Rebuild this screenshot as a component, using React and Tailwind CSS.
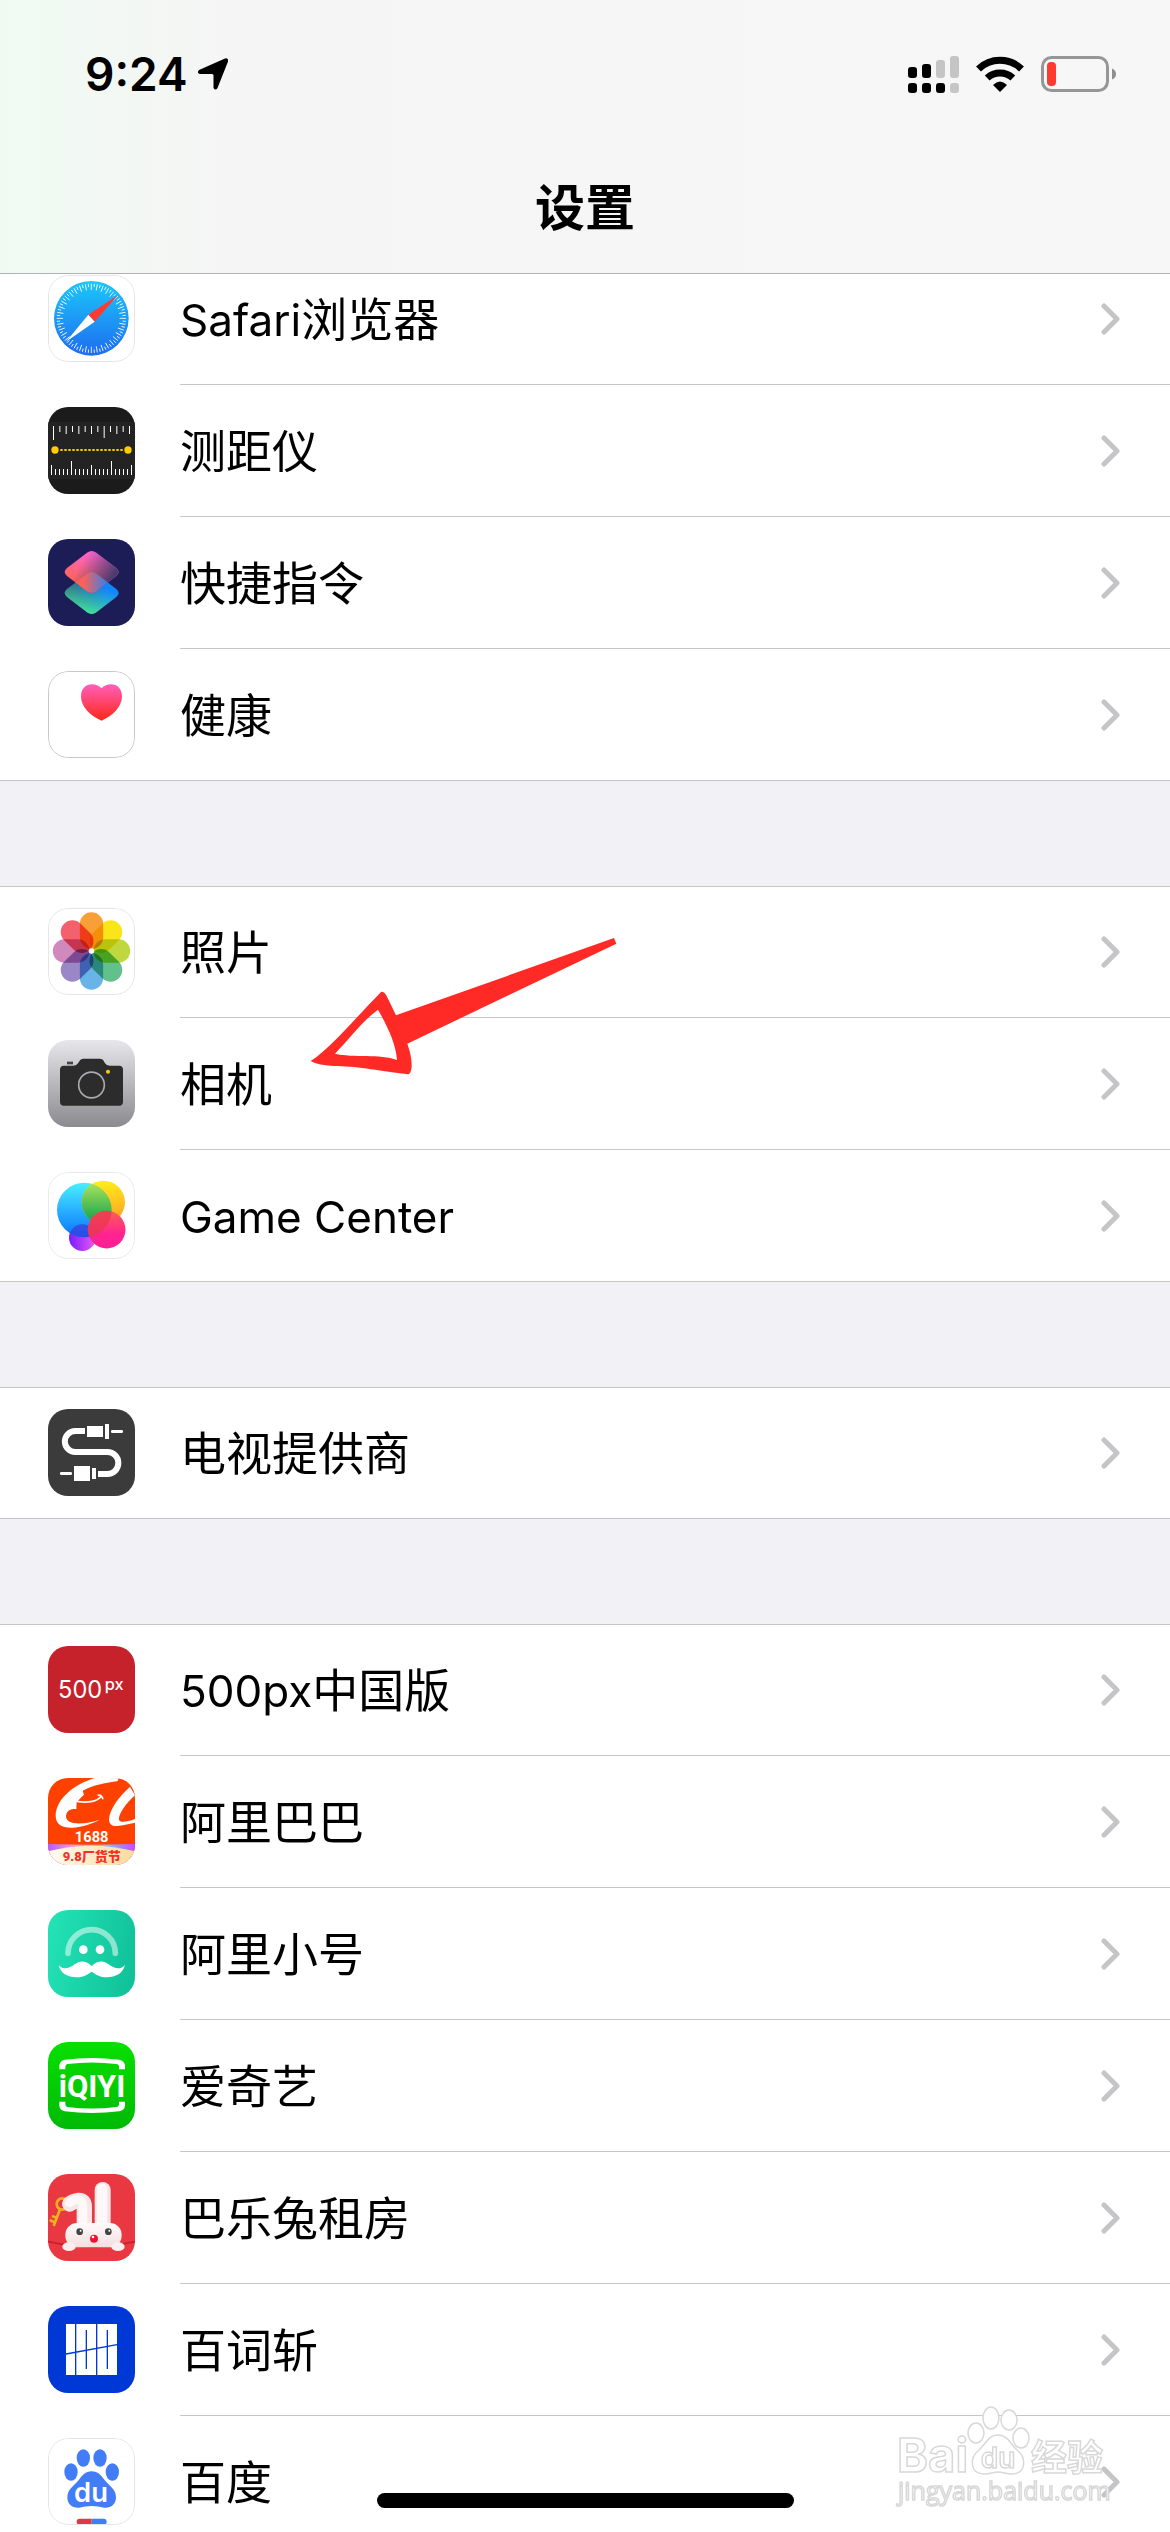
import clsx from "clsx";

const safariTicks = Array.from({ length: 72 }, (_, i) => i);
const topTicks = [42, 18, 24, 18, 24, 18, 24, 18, 36, 18, 24, 18, 24];
const bottomTicks = [30, 18, 18, 18, 18, 42, 18, 18, 18, 18, 30, 18, 18, 18, 18, 42, 18, 18, 18, 18, 30];
const petals = ["#f99f38", "#fae51a", "#c0d840", "#62c08c", "#69b4e6", "#9a88c6", "#d088bd", "#f3626c"];

// Every app icon is drawn on a 261 unit square
function Tile({ fill = "#fff", border, children }) {
  return (
    <svg viewBox="0 0 261 261" className="size-[87px] shrink-0 overflow-hidden rounded-[20px]" aria-hidden="true">
      <rect width="261" height="261" fill={fill} />
      {children}
      {border && <rect x="1.5" y="1.5" width="258" height="258" rx="59" fill="none" stroke={border} strokeWidth="3" />}
    </svg>
  );
}

function SafariIcon() {
  return (
    <Tile border="#e5e5e7">
      <defs>
        <linearGradient id="safari" x1="0" y1="0" x2="0" y2="1">
          <stop offset="0" stopColor="#1bc8fb" />
          <stop offset="1" stopColor="#1e6cf0" />
        </linearGradient>
      </defs>
      <circle cx="130" cy="130" r="112" fill="url(#safari)" />
      {safariTicks.map((i) => (
        <line key={i} x1="130" x2="130" y1="26" y2={i % 2 ? 36 : 45} stroke="#fff" strokeWidth="2.5" transform={`rotate(${i * 5} 130 130)`} />
      ))}
      <path d="M210 60 L121 119 L140 140 Z" fill="#ff3b30" />
      <path d="M54 200 L121 119 L140 140 Z" fill="#fff" />
    </Tile>
  );
}

function MeasureIcon() {
  return (
    <Tile fill="#1b1b1b">
      <rect y="45" width="261" height="171" fill="#232323" />
      {topTicks.map((h, i) => (
        <rect key={i} x={15 + i * 19} y="57" width="3" height={h} fill="#fff" />
      ))}
      {bottomTicks.map((h, i) => (
        <rect key={i} x={9 + i * 12} y={204 - h} width="3" height={h} fill="#fff" />
      ))}
      <line x1="37" x2="226" y1="129" y2="129" stroke="#ffcc00" strokeWidth="6" strokeDasharray="7 5" />
      <circle cx="21" cy="129" r="11" fill="#ffcc00" />
      <circle cx="240" cy="129" r="11" fill="#ffcc00" />
    </Tile>
  );
}

const diamond = "M-14 -58 Q0 -68 14 -58 L74 -12 Q88 0 74 12 L14 58 Q0 68 -14 58 L-74 12 Q-88 0 -74 -12 Z";

function ShortcutsIcon() {
  return (
    <Tile fill="#1c1c57">
      <defs>
        <linearGradient id="scBlue" x1="0" y1="0" x2="1" y2="0">
          <stop offset="0" stopColor="#33566f" />
          <stop offset="0.75" stopColor="#1284fb" />
        </linearGradient>
        <linearGradient id="scGreen" x1="0.65" y1="0.35" x2="0.4" y2="1">
          <stop offset="0" stopColor="#3fd8a0" stopOpacity="0" />
          <stop offset="1" stopColor="#45e696" />
        </linearGradient>
        <linearGradient id="scPink" x1="0.6" y1="0" x2="0.3" y2="0.8">
          <stop offset="0" stopColor="#f964dc" />
          <stop offset="1" stopColor="#ff6450" />
        </linearGradient>
        <linearGradient id="scFade" x1="0.3" y1="0.3" x2="0.9" y2="0.6">
          <stop offset="0" stopColor="#4b3a6e" stopOpacity="0" />
          <stop offset="1" stopColor="#4b3a6e" />
        </linearGradient>
        <linearGradient id="scMix" x1="0.35" y1="0" x2="0.8" y2="0">
          <stop offset="0" stopColor="#f9625a" />
          <stop offset="1" stopColor="#2f80ee" />
        </linearGradient>
        <clipPath id="scClip">
          <path d={diamond} transform="translate(131 99)" />
        </clipPath>
      </defs>
      <g transform="translate(131 162)">
        <path d={diamond} fill="url(#scBlue)" />
        <path d={diamond} fill="url(#scGreen)" />
      </g>
      <g transform="translate(131 99)">
        <path d={diamond} fill="url(#scPink)" />
        <path d={diamond} fill="url(#scFade)" />
      </g>
      <g clipPath="url(#scClip)">
        <path d={diamond} transform="translate(131 162)" fill="url(#scMix)" />
      </g>
    </Tile>
  );
}

function HealthIcon() {
  return (
    <Tile border="#c8c8ca">
      <defs>
        <linearGradient id="heart" x1="0" y1="0" x2="0" y2="1">
          <stop offset="0" stopColor="#ff5fbb" />
          <stop offset="1" stopColor="#ff2616" />
        </linearGradient>
      </defs>
      <path d="M160.500 149 C126 134 99 108 99 76 C99 54 113 40 132 40 C145 40 155 45 160.500 52 C166 45 176 40 189 40 C208 40 222 54 222 76 C222 108 195 134 160.500 149 Z" fill="url(#heart)" />
    </Tile>
  );
}

function PhotosIcon() {
  return (
    <Tile border="#e5e5e7">
      <g transform="translate(130.500 129)">
        {petals.map((color, i) => (
          <rect key={color} x="-35" y="-116" width="70" height="110" rx="35" fill={color} transform={`rotate(${i * 45})`} className="mix-blend-multiply" />
        ))}
        <circle r="8" fill="#fff" />
      </g>
    </Tile>
  );
}

function CameraIcon() {
  return (
    <Tile fill="url(#camera)">
      <defs>
        <linearGradient id="camera" x1="0" y1="0" x2="0" y2="1">
          <stop offset="0" stopColor="#e6e6eb" />
          <stop offset="1" stopColor="#8b8a8f" />
        </linearGradient>
      </defs>
      <rect x="57" y="65" width="18" height="8" fill="#444446" />
      <path d="M48 77 H76 Q86 77 90 70 L96 61 Q99 56 106 56 H156 Q163 56 166 61 L171 70 Q175 77 185 77 H213 Q225 77 225 89 V185 Q225 197 213 197 H48 Q36 197 36 185 V89 Q36 77 48 77 Z" fill="#2c2c2c" />
      <circle cx="130.500" cy="135" r="38.500" fill="none" stroke="#a9a9ae" strokeWidth="5" />
      <circle cx="180" cy="95" r="6" fill="#ffcc00" />
    </Tile>
  );
}

function GameCenterIcon() {
  return (
    <Tile border="#e9e9e9">
      <defs>
        <linearGradient id="gcBlue" x1="0" y1="0" x2="0" y2="1">
          <stop offset="0" stopColor="#48f0ff" />
          <stop offset="1" stopColor="#0a72ff" />
        </linearGradient>
        <linearGradient id="gcYellow" x1="0" y1="0" x2="0.2" y2="1">
          <stop offset="0" stopColor="#fff61a" />
          <stop offset="1" stopColor="#ffa624" />
        </linearGradient>
        <linearGradient id="gcGreen" x1="0" y1="0" x2="0" y2="1">
          <stop offset="0" stopColor="#b5e65c" />
          <stop offset="1" stopColor="#0aa04c" />
        </linearGradient>
        <linearGradient id="gcPink" x1="0" y1="0" x2="0" y2="1">
          <stop offset="0" stopColor="#ff5f52" />
          <stop offset="0.6" stopColor="#ff2490" />
          <stop offset="1" stopColor="#ff1f96" />
        </linearGradient>
        <linearGradient id="gcPurple" x1="0" y1="0" x2="1" y2="0">
          <stop offset="0" stopColor="#7a1cff" />
          <stop offset="1" stopColor="#e85af0" />
        </linearGradient>
        <clipPath id="gcClip">
          <circle cx="109" cy="114" r="82" />
        </clipPath>
      </defs>
      <circle cx="103" cy="197" r="40" fill="url(#gcPurple)" />
      <circle cx="109" cy="114" r="82" fill="url(#gcBlue)" />
      <circle cx="166" cy="91" r="65" fill="url(#gcYellow)" />
      <g clipPath="url(#gcClip)">
        <circle cx="166" cy="91" r="65" fill="url(#gcGreen)" />
        <circle cx="103" cy="197" r="40" fill="#3a3bdc" opacity="0.7" />
      </g>
      <circle cx="176" cy="173" r="56.500" fill="url(#gcPink)" />
      <g clipPath="url(#gcClip)">
        <circle cx="176" cy="173" r="56.500" fill="#e8384f" opacity="0.75" />
      </g>
    </Tile>
  );
}

function TvProviderIcon() {
  return (
    <Tile fill="#3b3b3b">
      <path d="M111 66 H82 A31.500 31.500 0 0 0 82 129 H178 A33 33 0 0 1 178 195 H150" fill="none" stroke="#fff" strokeWidth="18" />
      <g fill="#fff">
        <rect x="117" y="51" width="48" height="33" />
        <rect x="171" y="45" width="12" height="45" />
        <rect x="189" y="63" width="36" height="9" rx="4" />
        <rect x="78" y="171" width="48" height="45" />
        <rect x="132" y="177" width="12" height="33" />
        <rect x="36" y="189" width="36" height="9" rx="4" />
      </g>
    </Tile>
  );
}

function FiveHundredIcon() {
  return (
    <Tile fill="#c6222b">
      <text x="30" y="155" className="fill-white font-[Inter] text-[71px] font-normal">500</text>
      <text x="170" y="133" className="fill-white font-[Inter] text-[49px] font-medium">px</text>
    </Tile>
  );
}

function AlibabaIcon() {
  return (
    <Tile fill="#ff4100">
      <defs>
        <linearGradient id="aliBand" x1="0" y1="0" x2="1" y2="0">
          <stop offset="0" stopColor="#b35cff" />
          <stop offset="0.3" stopColor="#ff9ad0" />
          <stop offset="0.7" stopColor="#8fb4ff" />
          <stop offset="1" stopColor="#c04dff" />
        </linearGradient>
        <linearGradient id="aliCream" x1="0" y1="0" x2="1" y2="0">
          <stop offset="0" stopColor="#fffaf2" />
          <stop offset="1" stopColor="#f9dc9a" />
        </linearGradient>
      </defs>
      <path d="M140 0 C80 18 24 62 23 113 C23 139 44 150 72 149 C104 147 134 137 155 125 C130 133 100 139 76 135 C55 131 49 117 58 102 C64 94 75 91 85 94 L86 72 L98 60 L108 50 L104 38 C140 20 175 14 208 10 L213 0 Z" fill="#fff" />
      <path d="M86 70 C120 76 152 70 160 53 M149 52 C156 50 162 54 165 64" fill="none" stroke="#fff" strokeWidth="5" />
      <path d="M246 26 C212 56 184 96 183 124 C183 145 200 147 225 142 L261 134 V123 C235 132 216 135 213 125 C211 108 235 75 261 52 Z" fill="#fff" />
      <text x="131" y="193" textAnchor="middle" className="fill-white font-[Roboto] text-[44px] font-bold">1688</text>
      <path d="M0 198 Q130 202 261 198 V261 H0 Z" fill="url(#aliBand)" />
      <path d="M0 220 Q130 186 261 220 V261 H0 Z" fill="url(#aliCream)" />
      <text x="131" y="249" textAnchor="middle" className="fill-[#f3312b] font-[Roboto,'Noto_Sans_CJK_SC',sans-serif] text-[39px] font-black">9.8厂货节</text>
    </Tile>
  );
}

function AliNumberIcon() {
  return (
    <Tile fill="url(#aliNumber)">
      <defs>
        <linearGradient id="aliNumber" x1="0" y1="0.4" x2="1" y2="0.6">
          <stop offset="0" stopColor="#22e2b5" />
          <stop offset="1" stopColor="#11c19a" />
        </linearGradient>
      </defs>
      <path d="M60 130 A71 71 0 0 1 202 130" fill="none" stroke="#fff" strokeOpacity="0.5" strokeWidth="17" strokeLinecap="round" />
      <circle cx="106" cy="119" r="13" fill="#fff" />
      <circle cx="156" cy="119" r="13" fill="#fff" />
      <path d="M32 165 C45 181 62 176 80 163 C95 152 112 150 131 168 C150 150 167 152 182 163 C200 176 217 181 231 165 C225 195 190 207 160 200 C148 197 138 190 131 185 C124 190 114 197 102 200 C72 207 37 195 32 165 Z" fill="#fff" />
    </Tile>
  );
}

function IqiyiIcon() {
  return (
    <Tile fill="url(#iqiyi)">
      <defs>
        <linearGradient id="iqiyi" x1="0" y1="0" x2="0" y2="1">
          <stop offset="0" stopColor="#08e000" />
          <stop offset="1" stopColor="#00b906" />
        </linearGradient>
      </defs>
      <g fill="#fff">
        <path d="M34 82 V70 Q36 56 50 53 Q131 43 214 53 Q229 56 231 70 V82 H213 V75 Q213 67 205 66 Q131 57 58 66 Q52 67 52 75 V82 Z" />
        <path d="M34 179 V192 Q36 205 50 208 Q131 218 214 208 Q229 205 231 192 V179 H213 V186 Q213 194 205 195 Q131 204 58 195 Q52 194 52 186 V179 Z" />
      </g>
      <text x="132" y="164" textAnchor="middle" className="fill-white font-[Roboto] text-[93px] font-bold">iQIYI</text>
    </Tile>
  );
}

function RabbitIcon() {
  return (
    <Tile fill="#ea3842">
      <defs>
        <linearGradient id="rabbit" x1="0" y1="0" x2="0" y2="1">
          <stop offset="0" stopColor="#fffafa" />
          <stop offset="1" stopColor="#f3dfe0" />
        </linearGradient>
      </defs>
      <path d="M0 203 Q130 232 261 203" fill="none" stroke="#c91f2c" strokeWidth="5" />
      <g fill="none" stroke="#f0b01f" strokeWidth="8">
        <circle cx="43" cy="90" r="17" />
        <path d="M36 106 L17 156 M22 146 L5 138 M27 132 L12 126" />
      </g>
      <path d="M109 160 V98 Q109 79 92 79 Q76 81 65 90" fill="none" stroke="#f6e6e7" strokeWidth="46" strokeLinecap="round" />
      <path d="M105 160 V98 Q104 78 90 76 Q76 77 64 87" fill="none" stroke="#fff8f8" strokeWidth="26" strokeLinecap="round" />
      <rect x="140" y="24" width="48" height="150" rx="24" fill="#f4e3e4" />
      <rect x="146" y="28" width="32" height="140" rx="16" fill="#fff8f8" />
      <rect x="52" y="147" width="169" height="73" rx="35" fill="url(#rabbit)" />
      <ellipse cx="63" cy="218" rx="20" ry="13" fill="#fbeeee" />
      <ellipse cx="210" cy="218" rx="20" ry="13" fill="#fbeeee" />
      <circle cx="95" cy="173" r="10" fill="#444" />
      <circle cx="181" cy="173" r="10" fill="#444" />
      <circle cx="98" cy="170" r="3" fill="#fff" />
      <circle cx="184" cy="170" r="3" fill="#fff" />
      <circle cx="138" cy="194" r="12" fill="#e8152b" />
      <circle cx="135" cy="189" r="4" fill="#fff" />
    </Tile>
  );
}

function BaicizhanIcon() {
  return (
    <Tile fill="#0038d6">
      <rect x="54" y="54" width="153" height="153" fill="#fff" />
      <path d="M83 54 V207 M146 54 V207 M115 72 V189 M178 72 V189 M54 144 L207 116" fill="none" stroke="#0038d6" strokeWidth="4" />
    </Tile>
  );
}

function BaiduIcon() {
  return (
    <Tile border="#e5e5e7">
      <g fill="#427df7">
        <ellipse cx="106" cy="60" rx="20" ry="26" />
        <ellipse cx="156" cy="60" rx="20" ry="26" />
        <ellipse cx="69" cy="102" rx="20" ry="26" />
        <ellipse cx="193" cy="102" rx="20" ry="26" />
        <path d="M131 100 C150 100 159 112 168 124 C180 141 204 152 204 178 C204 200 188 211 168 209 C154 207 145 204 131 204 C117 204 108 207 94 209 C74 211 58 200 58 178 C58 152 82 141 94 124 C103 112 112 100 131 100 Z" />
      </g>
      <text x="129" y="191" textAnchor="middle" className="fill-white font-[Inter] text-[82px] font-semibold">du</text>
      <path d="M131 242 H95 A9 9 0 0 0 95 260 H131 Z" fill="#dc3a45" />
      <path d="M131 242 H167 A9 9 0 0 1 167 260 H131 Z" fill="#427df7" />
    </Tile>
  );
}

const groups = [
  [
    { latin: "Safari", name: "浏览器", icon: SafariIcon },
    { name: "测距仪", icon: MeasureIcon },
    { name: "快捷指令", icon: ShortcutsIcon },
    { name: "健康", icon: HealthIcon },
  ],
  [
    { name: "照片", icon: PhotosIcon },
    { name: "相机", icon: CameraIcon, marked: true },
    { latin: "Game Center", icon: GameCenterIcon },
  ],
  [{ name: "电视提供商", icon: TvProviderIcon }],
  [
    { latin: "500px", name: "中国版", icon: FiveHundredIcon },
    { name: "阿里巴巴", icon: AlibabaIcon },
    { name: "阿里小号", icon: AliNumberIcon },
    { name: "爱奇艺", icon: IqiyiIcon },
    { name: "巴乐兔租房", icon: RabbitIcon },
    { name: "百词斩", icon: BaicizhanIcon },
    { name: "百度", icon: BaiduIcon },
  ],
];

function StatusBar() {
  return (
    <div className="flex h-[148px] items-center justify-between pr-[53px] pl-[85px]">
      <div className="flex items-center gap-[10px]">
        <span className="font-[Inter] text-[46px] leading-none font-semibold">9:24</span>
        <svg viewBox="0 0 30 32" className="h-8 w-[30px]" aria-hidden="true">
          <path d="M27 0.500 Q30.500 -0.500 30 3.500 L19.500 30 Q17.500 33 15.500 30 V17.500 Q15.500 16 14 16 H2 Q-1.500 15 1 12 Z" />
        </svg>
      </div>
      <div className="flex items-center gap-[17px]">
        <svg viewBox="0 0 51 37" className="h-[37px] w-[51px]" aria-hidden="true">
          <rect y="11" width="9" height="11" rx="3" />
          <rect x="14" y="8" width="9" height="14" rx="3" />
          <g fill="#c5c5c5">
            <rect x="28" y="4" width="9" height="18" rx="3" />
            <rect x="42" width="9" height="22" rx="3" />
            <rect x="42" y="27" width="9" height="10" rx="3" />
          </g>
          <rect y="27" width="9" height="10" rx="3" />
          <rect x="14" y="27" width="9" height="10" rx="3" />
          <rect x="28" y="27" width="9" height="10" rx="3" />
        </svg>
        <svg viewBox="0 0 48 36" className="h-9 w-12" aria-hidden="true">
          <path d="M2.500 13 A31 31 0 0 1 45.500 13" fill="none" stroke="#000" strokeWidth="7" />
          <path d="M11.200 22 A19 19 0 0 1 36.800 22" fill="none" stroke="#000" strokeWidth="7" />
          <path d="M17 29 Q24 22 31 29 L24 36 Z" />
        </svg>
        <svg viewBox="0 0 76 36" className="h-9 w-[76px]" aria-hidden="true">
          <rect x="1.500" y="1.500" width="65" height="33" rx="9" fill="none" stroke="#969696" strokeWidth="3" />
          <rect x="6" y="6" width="9" height="24" rx="4" fill="#ff3b30" />
          <path d="M71 12.500 Q75 14 75 18 Q75 22 71 23.500 Z" fill="#8e8e8e" />
        </svg>
      </div>
    </div>
  );
}

function Row({ latin, name, icon: Icon, marked }) {
  return (
    <li className="group relative">
      <a href="#" className="flex h-[132px] items-center pl-12">
        <span className="pb-px">
          <Icon />
        </span>
        <span className={clsx("ml-[45px] flex h-full flex-1 items-center justify-between border-b border-[#c6c6c8] pr-[50px]", "group-last:border-transparent")}>
          <span className="text-[46px] leading-none">
            {latin && <span className="text-[44px]">{latin}</span>}
            {name}
          </span>
          <svg viewBox="0 0 19 32" className="h-8 w-[19px]" aria-hidden="true">
            <path d="M3 3 L16 16 L3 29" fill="none" stroke="#c5c5c7" strokeWidth="5" strokeLinecap="round" strokeLinejoin="round" />
          </svg>
        </span>
      </a>
      {marked && (
        <svg viewBox="60 111 921 414" className="pointer-events-none absolute bottom-[75px] left-[310px] z-10 h-[138px] w-[307px]" aria-hidden="true">
          <path
            fillRule="evenodd"
            fill="#ff2a26"
            d="M274 275 Q284 275 290 288 L318 346 L972 114 L979 131 L352 431 Q366 470 365 500 Q363 520 355 523 C250 510 200 498 130 498 Q80 495 62 483 C120 447 190 360 274 275 Z M264 329 C220 360 180 415 135 461 C190 474 270 460 321 480 C318 430 290 375 264 329 Z"
          />
        </svg>
      )}
    </li>
  );
}

function Watermark() {
  return (
    <div className="pointer-events-none absolute right-[64px] bottom-[22px]">
      <svg viewBox="0 0 210 104" className="h-[104px] w-[210px] overflow-visible" aria-hidden="true">
        <g fill="#fff" stroke="#d8d8d8" strokeWidth="1.500" className="font-[Inter,'Noto_Sans_CJK_SC',sans-serif]">
          <text x="1" y="66" className="text-[47px] font-bold">Bai</text>
          <ellipse cx="80" cy="27" rx="8" ry="10" />
          <ellipse cx="95" cy="12" rx="8" ry="11" />
          <ellipse cx="113" cy="14" rx="8" ry="10" />
          <ellipse cx="125" cy="32" rx="8" ry="10" />
          <path d="M102 29 C112 29 115 39 121 44 C131 52 130 68 116 68 C110 68 107 66 102 66 C97 66 94 68 88 68 C74 68 73 52 83 44 C90 38 92 29 102 29 Z" />
          <text x="102" y="62" textAnchor="middle" className="text-[28px] font-semibold">du</text>
          <text x="135" y="65" className="text-[36px] font-bold">经验</text>
          <text x="2" y="94" className="font-['Open_Sans'] text-[25px] font-medium">jingyan.baidu.com</text>
        </g>
      </svg>
    </div>
  );
}

export default function App() {
  return (
    <div className="relative flex h-screen flex-col overflow-hidden bg-[#f2f1f6] font-[Inter,'Noto_Sans_CJK_SC',sans-serif] text-black">
      <header className="z-20 h-[274px] shrink-0 border-b border-[#b2b2b2] bg-linear-to-r from-[#f0faf2] via-[#f5f5f5] via-20% to-[#f7f7f7]">
        <StatusBar />
        <h1 className="text-center text-[50px] leading-[120px] font-bold">设置</h1>
      </header>

      <main className="flex-1 overflow-y-auto [scrollbar-width:none]">
        <div className="-mt-[21px] flex flex-col gap-[105px]">
          {groups.map((rows, i) => (
            <ul key={i} className="bg-white shadow-[inset_0_1px_0_#c6c6c8,inset_0_-1px_0_#c6c6c8]">
              {rows.map((row) => (
                <Row key={row.latin || row.name} {...row} />
              ))}
            </ul>
          ))}
        </div>
      </main>

      {/* Home indicator */}
      <div className="absolute inset-x-0 bottom-6 flex justify-center">
        <div className="h-[15px] w-[417px] rounded-full bg-black" />
      </div>
      <Watermark />
    </div>
  );
}
